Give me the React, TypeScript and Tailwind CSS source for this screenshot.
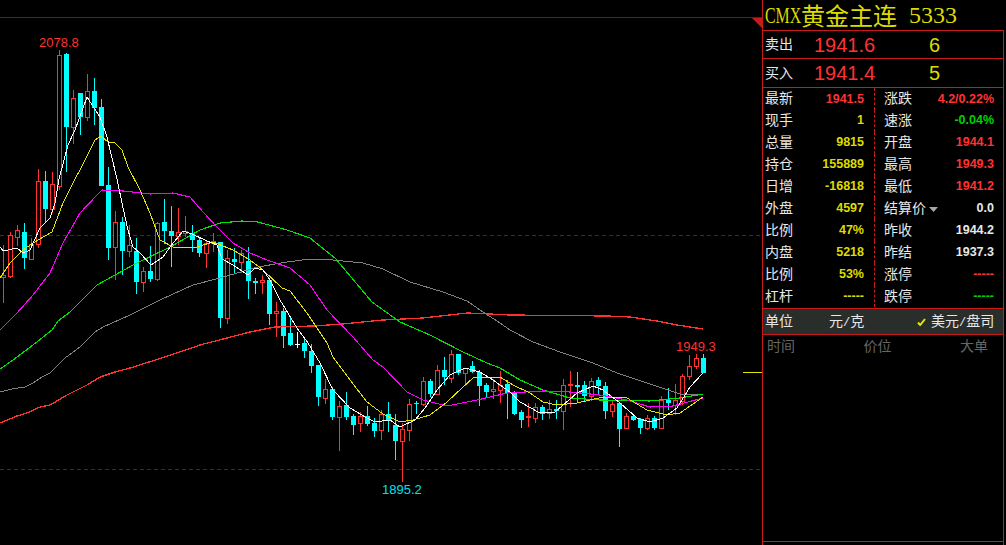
type Candle = [number, number, number, number, "r" | "c" | "w"];

// [body top, body bottom, wick top, wick bottom, colour] -- x = 3 + 7 * index
const CANDLES: Candle[] = [
  [275, 277, 245, 303, "r"], [235, 276, 232, 278, "r"], [230, 237, 225, 246, "r"], [232, 258, 223, 269, "c"],
  [244, 259, 238, 260, "r"], [181, 244, 169, 248, "r"], [181, 209, 171, 222, "c"], [184, 209, 172, 213, "r"],
  [55, 186, 50, 190, "r"], [54, 127, 53, 172, "c"], [98, 127, 90, 144, "r"], [93, 117, 93, 135, "c"],
  [91, 117, 74, 121, "r"], [91, 108, 78, 125, "c"], [107, 186, 99, 186, "c"], [185, 248, 167, 260, "c"],
  [222, 247, 211, 280, "r"], [222, 251, 217, 275, "c"], [245, 251, 225, 257, "r"], [251, 282, 238, 294, "c"],
  [271, 282, 267, 292, "r"], [271, 279, 246, 282, "c"], [223, 279, 222, 281, "r"], [222, 231, 199, 244, "c"],
  [231, 236, 206, 267, "c"], [232, 236, 208, 245, "r"], [231, 233, 216, 237, "r"], [233, 240, 225, 252, "c"],
  [240, 253, 237, 257, "c"], [243, 253, 240, 268, "r"], [241, 243, 233, 252, "r"], [242, 318, 242, 328, "c"],
  [258, 318, 250, 324, "r"], [259, 262, 248, 273, "c"], [253, 262, 250, 273, "r"], [261, 281, 247, 299, "c"],
  [281, 283, 278, 294, "c"], [280, 282, 275, 294, "r"], [280, 314, 278, 325, "c"], [311, 313, 302, 337, "r"],
  [311, 336, 308, 348, "c"], [333, 345, 318, 346, "c"], [344, 345, 332, 348, "w"], [343, 351, 337, 358, "c"],
  [351, 366, 344, 373, "c"], [365, 397, 365, 406, "c"], [389, 398, 379, 404, "r"], [389, 417, 387, 420, "c"],
  [406, 417, 401, 451, "r"], [405, 417, 392, 420, "c"], [416, 425, 414, 435, "c"], [416, 423, 412, 432, "r"],
  [416, 424, 406, 426, "c"], [423, 431, 418, 437, "c"], [414, 430, 410, 440, "r"], [414, 421, 402, 432, "c"],
  [425, 441, 414, 460, "c"], [429, 441, 423, 482, "r"], [404, 430, 399, 441, "r"], [403, 404, 401, 414, "c"],
  [381, 404, 377, 406, "r"], [381, 394, 379, 397, "c"], [370, 394, 365, 395, "r"], [370, 377, 357, 385, "c"],
  [354, 378, 350, 383, "r"], [354, 373, 354, 375, "c"], [368, 373, 368, 386, "r"], [366, 372, 361, 373, "c"],
  [372, 386, 370, 406, "c"], [385, 392, 383, 397, "c"], [389, 391, 379, 399, "r"], [385, 390, 371, 403, "r"],
  [384, 393, 380, 419, "c"], [393, 414, 391, 415, "c"], [412, 420, 410, 428, "c"], [416, 417, 403, 427, "r"],
  [407, 418, 403, 423, "r"], [407, 414, 405, 420, "c"], [409, 413, 400, 419, "r"], [409, 411, 400, 419, "c"],
  [385, 411, 379, 430, "r"], [384, 385, 371, 407, "r"], [385, 387, 372, 402, "c"], [385, 396, 381, 401, "c"],
  [381, 396, 378, 401, "r"], [380, 386, 377, 395, "c"], [386, 411, 382, 419, "c"], [404, 411, 400, 417, "r"],
  [403, 429, 403, 447, "c"], [416, 428, 413, 429, "r"], [416, 420, 415, 421, "c"], [419, 428, 418, 434, "c"],
  [418, 428, 415, 430, "r"], [418, 428, 416, 430, "c"], [400, 428, 396, 429, "r"], [400, 403, 388, 410, "c"],
  [400, 405, 384, 415, "r"], [376, 401, 374, 405, "r"], [366, 376, 355, 380, "r"], [358, 366, 354, 369, "r"],
  [358, 373, 354, 373, "c"],
];

const MA_LINES: { color: string; width: number; points: string }[] = [
  {
    color: "#ff3232",
    width: 1.3,
    points:
      "0,423 17,416 27,413 40,407 50,405 67,395 87,385 100,377 115,372 130,368 165,357 200,345 250,332 275,327 313,326 343,324 383,320 423,318 467,313 490,314 510,315 608,316 630,317 657,321 677,325 703,329",
  },
  {
    color: "#808080",
    width: 1,
    points:
      "0,392 12,389 25,387 33,383 42,377 50,373 65,358 80,347 95,332 103,327 130,315 160,300 193,285 220,278 258,267 287,262 310,259 333,260 363,263 383,269 410,282 443,292 467,301 483,312 500,323 510,330 533,342 560,352 593,363 617,373 647,383 680,394 703,395",
  },
  {
    color: "#00e600",
    width: 1.1,
    points:
      "0,369 13,360 33,345 52,330 58,321 70,312 97,285 133,265 170,247 200,230 220,223 242,221 258,222 287,230 310,238 335,258 372,302 400,322 430,335 463,352 487,363 500,368 520,380 543,390 570,398 600,400 650,401 680,398 703,394",
  },
  {
    color: "#ff00ff",
    width: 1.1,
    points:
      "0,330 17,313 33,295 50,273 63,243 80,213 97,195 102,190 123,191 150,194 173,193 190,197 203,212 217,227 233,243 250,253 267,260 290,268 310,285 327,310 353,337 373,360 383,367 407,392 423,400 447,406 477,400 507,393 543,391 570,392 600,395 627,400 650,407 673,406 703,398",
  },
  {
    color: "#e6e600",
    width: 1,
    points:
      "0,278 10,263 23,250 33,243 52,232 63,203 75,179 80,170 95,140 101,136 108,142 115,143 122,150 128,167 140,190 150,213 160,240 173,247 197,247 213,242 233,250 250,260 263,270 282,288 290,291 307,313 327,343 333,357 350,380 367,402 383,414 400,422 413,420 430,415 447,402 463,387 473,378 500,377 513,385 530,393 543,402 557,405 577,403 603,397 627,398 647,410 667,415 680,413 703,397",
  },
  {
    color: "#ffffff",
    width: 1,
    points:
      "0,247 3,251 17,248 23,253 30,250 40,228 50,218 55,203 59,179 68,145 75,130 87,97 100,117 107,137 117,179 122,203 128,230 133,247 140,253 151,265 163,257 170,247 183,231 192,234 207,241 217,245 222,259 233,265 248,275 255,268 263,270 270,280 280,300 297,328 308,343 320,363 333,390 350,408 367,418 375,422 390,420 400,427 415,420 425,408 437,390 450,375 465,368 480,372 493,380 510,392 520,402 540,413 555,412 577,393 593,386 603,390 620,403 637,418 650,422 663,418 677,408 690,387 703,373",
  },
];

const BODY_COLOR = { r: "#ff3232", c: "#00ffff", w: "#ffffff" };

function KLineChart() {
  return (
    <svg width="762" height="545" viewBox="0 0 762 545" className="block">
      <line x1="0" y1="17.5" x2="762" y2="17.5" stroke="#8b0a0a" />
      <polygon points="752,18 762,18 762,28" fill="#c81a1a" />
      <line x1="0" y1="235.5" x2="760" y2="235.5" stroke="#8b0a0a" strokeDasharray="4 3" />
      <line x1="0" y1="469.5" x2="760" y2="469.5" stroke="#8b0a0a" strokeDasharray="4 3" />
      <line x1="743" y1="372.5" x2="762" y2="372.5" stroke="#e6e600" />

      {CANDLES.map(([top, bottom, wickTop, wickBottom, c], i) => {
        const x = 3 + 7 * i;
        return (
          <g key={i}>
            <rect x={x} y={wickTop} width="1" height={wickBottom - wickTop} fill={BODY_COLOR[c]} />
            {c === "r" ? (
              <rect x={x - 1.5} y={top + 0.5} width="4" height={bottom - top} fill="#000" stroke="#ff3232" />
            ) : (
              <rect x={x - 2} y={top} width="5" height={bottom - top} fill={BODY_COLOR[c]} />
            )}
          </g>
        );
      })}

      {MA_LINES.map((line) => (
        <polyline
          key={line.color}
          points={line.points}
          fill="none"
          stroke={line.color}
          strokeWidth={line.width}
          shapeRendering="crispEdges"
        />
      ))}

      <g fontFamily="'Liberation Sans', sans-serif" fontSize="13">
        <text x="39" y="47" fill="#ff3232">2078.8</text>
        <text x="382" y="494" fill="#00e0f0">1895.2</text>
        <text x="676" y="351" fill="#ff3232">1949.3</text>
      </g>
    </svg>
  );
}

const RED = "text-[#ff3232]";
const YELLOW = "text-[#dcdc00]";
const GREEN = "text-[#00d000]";
const PALE = "text-[#e8e8e8]";

const ROWS: { l: string; lv: string; lc: string; r: string; rv: string; rc: string; caret?: boolean }[] = [
  { l: "最新", lv: "1941.5", lc: RED, r: "涨跌", rv: "4.2/0.22%", rc: RED },
  { l: "现手", lv: "1", lc: YELLOW, r: "速涨", rv: "-0.04%", rc: GREEN },
  { l: "总量", lv: "9815", lc: YELLOW, r: "开盘", rv: "1944.1", rc: RED },
  { l: "持仓", lv: "155889", lc: YELLOW, r: "最高", rv: "1949.3", rc: RED },
  { l: "日增", lv: "-16818", lc: YELLOW, r: "最低", rv: "1941.2", rc: RED },
  { l: "外盘", lv: "4597", lc: YELLOW, r: "结算价", rv: "0.0", rc: PALE, caret: true },
  { l: "比例", lv: "47%", lc: YELLOW, r: "昨收", rv: "1944.2", rc: PALE },
  { l: "内盘", lv: "5218", lc: YELLOW, r: "昨结", rv: "1937.3", rc: PALE },
  { l: "比例", lv: "53%", lc: YELLOW, r: "涨停", rv: "-----", rc: RED },
  { l: "杠杆", lv: "-----", lc: YELLOW, r: "跌停", rv: "-----", rc: GREEN },
];

function Slash() {
  return <span className="[font-family:'Liberation_Mono',monospace] text-[12px]">/</span>;
}

function QuotePanel() {
  return (
    <div className="flex h-[545px] w-[242px] flex-col border-l border-[#c81a1a] [font-family:'Liberation_Sans','Noto_Sans_CJK_SC',sans-serif] text-[14px] text-[#e8e8e8]">
      {/* 标题 */}
      <div className="flex h-[30px] items-center pl-[2px] text-[24px] leading-[30px] whitespace-nowrap text-[#dcdc00]">
        <span className="w-[36px]">
          <span className="inline-block origin-left scale-x-[0.66] [font-family:'Liberation_Serif',serif]">CMX</span>
        </span>
        <span className="[font-family:'Noto_Sans_CJK_SC',sans-serif]">黄金主连</span>
        <span className="ml-[12px] [font-family:'Liberation_Serif',serif]">5333</span>
      </div>

      <div className="flex flex-1 flex-col border-t border-r border-[#c81a1a]">
        {/* 盘口 */}
        <div className="flex h-[28px] items-center border-b border-[#c81a1a] pl-[2px]">
          <span className="w-[49px]">卖出</span>
          <span className="w-[115px] text-[20px] text-[#ff3232]">1941.6</span>
          <span className="text-[20px] text-[#dcdc00]">6</span>
        </div>
        <div className="flex h-[29px] items-center border-b border-[#c81a1a] pl-[2px]">
          <span className="w-[49px]">买入</span>
          <span className="w-[115px] text-[20px] text-[#ff3232]">1941.4</span>
          <span className="text-[20px] text-[#dcdc00]">5</span>
        </div>

        {/* 报价表 */}
        <div className="flex h-[221px] flex-col border-b border-[#c81a1a] pb-[1px]">
          {ROWS.map((row, i) => (
            <div key={i} className="flex flex-1 items-center">
              <div className="flex h-full w-[112px] items-center justify-between border-r border-dashed border-[#c81a1a] pr-[10px] pl-[2px]">
                <span>{row.l}</span>
                <span className={`text-[12.5px] font-bold ${row.lc}`}>{row.lv}</span>
              </div>
              <div className="flex flex-1 items-center justify-between pr-[9px] pl-[9px]">
                <span className="flex items-center">
                  {row.r}
                  {row.caret && (
                    <svg width="9" height="5" viewBox="0 0 9 5" className="mt-[2px] ml-[3px]">
                      <polygon points="0,0 9,0 4.5,5" fill="#a8a8a8" />
                    </svg>
                  )}
                </span>
                <span className={`text-[12.5px] font-bold ${row.rc}`}>{row.rv}</span>
              </div>
            </div>
          ))}
        </div>

        {/* 单位切换 */}
        <div className="flex h-[26px] items-center border-b border-[#c81a1a] bg-[#2a2e2a] pl-[2px]">
          <span className="w-[64px]">单位</span>
          <span className="w-[88px]">
            元<Slash />克
          </span>
          <svg width="9" height="8" viewBox="0 0 9 8" className="mr-[5px]">
            <path d="M1 4.5 L3.2 7 L8 1" fill="none" stroke="#e6e600" strokeWidth="2" />
          </svg>
          <span>
            美元<Slash />盘司
          </span>
        </div>

        {/* 成交明细 */}
        <div className="mb-[3px] flex flex-1 items-start justify-between border-b border-[#c81a1a] pt-[1px] pr-[15px] pl-[4px] text-[#666666]">
          <span>时间</span>
          <span>价位</span>
          <span>大单</span>
        </div>
      </div>
    </div>
  );
}

export default function App() {
  return (
    <div className="flex h-[545px] w-[1006px] overflow-hidden bg-black">
      <KLineChart />
      <QuotePanel />
    </div>
  );
}
